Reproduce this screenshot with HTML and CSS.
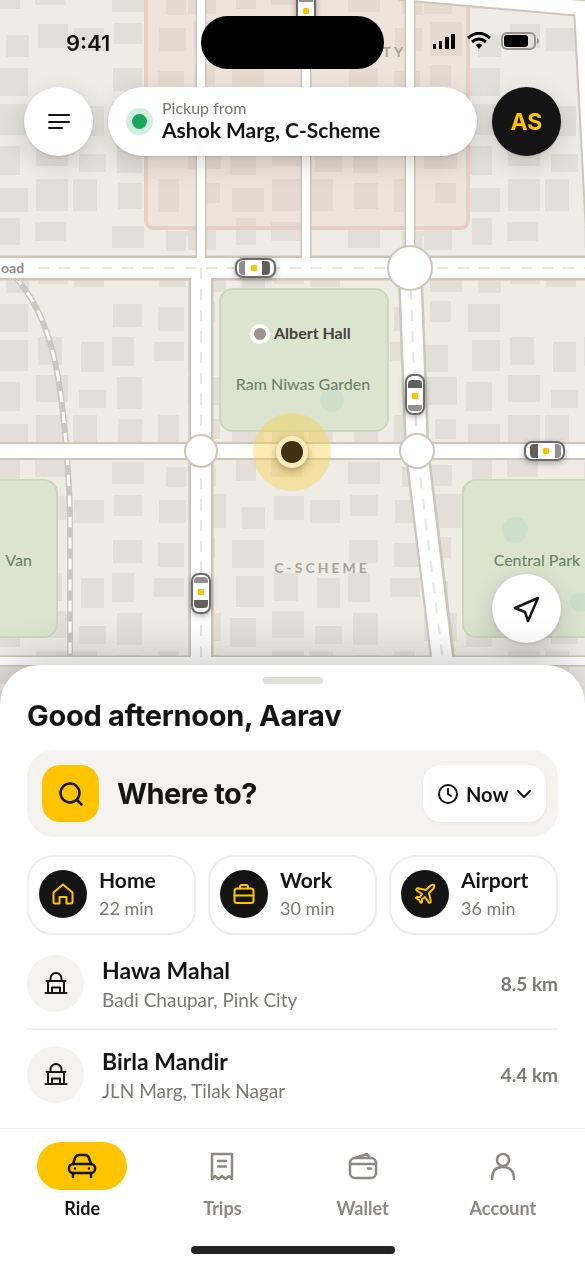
FILE: index.html
```html
<!DOCTYPE html>
<html lang="en">
<head>
    <meta charset="UTF-8">
    <meta name="viewport" content="width=device-width, initial-scale=1">
    <title>Ride</title>
    <link rel="stylesheet" href="styles.css">
</head>
<body>
<div class="app">
    <main class="map-area">
        <svg class="map" viewBox="0 0 585 704" preserveAspectRatio="xMidYMin slice" aria-hidden="true">
            <defs>
                <!-- city blocks, repeated over the whole map -->
                <pattern id="blocks" width="236" height="236" patternUnits="userSpaceOnUse">
                    <g class="block">
                        <rect x="0" y="218" width="20" height="18"/><rect x="0" y="0" width="20" height="9"/>
                        <rect x="35" y="222" width="31" height="14"/><rect x="35" y="0" width="31" height="5"/>
                        <rect x="112" y="226" width="32" height="10"/><rect x="112" y="0" width="32" height="12"/>
                        <rect x="166" y="231" width="22" height="5"/><rect x="166" y="0" width="20" height="15"/>
                        <rect x="188" y="229" width="28" height="7"/><rect x="188" y="0" width="28" height="14"/>
                        <rect x="6" y="35" width="23" height="22"/>
                        <rect x="38" y="24" width="30" height="24"/>
                        <rect x="74" y="28" width="30" height="23"/>
                        <rect x="114" y="23" width="28" height="21"/>
                        <rect x="159" y="28" width="27" height="23"/>
                        <rect x="194" y="22" width="32" height="34"/>
                        <rect x="0" y="68" width="28" height="28"/><rect x="232" y="68" width="4" height="28"/>
                        <rect x="113" y="68" width="29" height="23"/>
                        <rect x="158" y="71" width="26" height="24"/>
                        <rect x="194" y="65" width="21" height="21"/>
                        <rect x="0" y="104" width="28" height="31"/>
                        <rect x="38" y="101" width="24" height="28"/>
                        <rect x="81" y="106" width="23" height="30"/>
                        <rect x="112" y="101" width="22" height="29"/>
                        <rect x="154" y="106" width="30" height="19"/>
                        <rect x="188" y="109" width="24" height="27"/>
                        <rect x="0" y="146" width="20" height="29"/><rect x="230" y="146" width="6" height="29"/>
                        <rect x="36" y="139" width="32" height="27"/>
                        <rect x="79" y="154" width="27" height="18"/>
                        <rect x="117" y="141" width="25" height="32"/>
                        <rect x="188" y="141" width="33" height="28"/>
                        <rect x="0" y="188" width="28" height="24"/><rect x="232" y="188" width="4" height="24"/>
                        <rect x="36" y="179" width="32" height="32"/>
                        <rect x="73" y="179" width="24" height="32"/>
                        <rect x="118" y="183" width="24" height="26"/>
                        <rect x="158" y="179" width="21" height="33"/>
                        <rect x="199" y="183" width="21" height="20"/>
                    </g>
                </pattern>
                <symbol id="taxi" viewBox="-12 -23 24 46" overflow="visible">
                    <rect class="taxi-body" x="-9" y="-20" width="18" height="39" rx="7"/>
                    <path class="taxi-front" d="M-7-7v-4q0-4 4-4h6q4 0 4 4v4z"/>
                    <rect class="taxi-sign" x="-3" y="-2" width="6" height="6" rx="1"/>
                    <path class="taxi-back" d="M-7 10h14v2q0 4-4 4h-6q-4 0-4-4z"/>
                </symbol>
            </defs>

            <rect class="land" width="585" height="704"/>
            <rect width="585" height="704" fill="url(#blocks)"/>
            <rect class="old-city" x="146" y="-20" width="322" height="248" rx="7"/>

            <rect class="park" x="-80" y="480" width="137" height="157" rx="13"/>
            <rect class="park" x="220" y="289" width="168" height="142" rx="13"/>
            <rect class="park" x="463" y="480" width="170" height="157" rx="13"/>
            <g class="pond">
                <circle cx="332" cy="400" r="12"/>
                <circle cx="515" cy="530" r="13"/>
                <circle cx="580" cy="602" r="10"/>
            </g>

            <path class="rail" d="M14 276C58 322 62 400 67 455Q70 500 70 520V658"/>
            <path class="rail-ties" d="M14 276C58 322 62 400 67 455Q70 500 70 520V658"/>

            <g class="casing">
                <path class="lane" d="M201 0V268M306 0V268M410 0V268M0 661H585"/>
                <path class="street" d="M0 451H585M400-8L582 8L596 268"/>
                <path class="road" d="M201 268V661M410 268L417 451L443 661"/>
                <path class="road" d="M0 268H585"/>
            </g>
            <g class="surface">
                <path class="lane" d="M201 0V268M306 0V268M410 0V268M0 661H585"/>
                <path class="street" d="M0 451H585M400-8L582 8L596 268"/>
                <path class="road" d="M0 268H585M201 268V661M410 268L417 451L443 665"/>
            </g>
            <path class="lane-marks" d="M38 268H585M201 268V661M410 268L417 451L443 661"/>

            <g class="roundabout">
                <circle cx="410" cy="268" r="22"/>
                <circle cx="201" cy="451" r="16"/>
                <circle cx="417" cy="451" r="17"/>
            </g>

            <g class="label">
                <text class="label-road" x="1" y="273">oad</text>
                <text class="label-park" x="303" y="390" text-anchor="middle">Ram Niwas Garden</text>
                <text class="label-park" x="32" y="566" text-anchor="end">Van</text>
                <text class="label-park" x="537" y="566" text-anchor="middle">Central Park</text>
                <text class="label-area" x="322" y="573" text-anchor="middle">C-SCHEME</text>
                <text class="label-area" x="406" y="57" text-anchor="end">PINK CITY</text>
                <circle class="place-dot" cx="260" cy="334" r="8"/>
                <text class="label-place" x="274" y="339">Albert Hall</text>
            </g>

            <g class="taxi">
                <use href="#taxi" x="-12" y="-23" width="24" height="46" transform="translate(306 12) rotate(180)"/>
                <use href="#taxi" x="-12" y="-23" width="24" height="46" transform="translate(255 268) rotate(90)"/>
                <use href="#taxi" x="-12" y="-23" width="24" height="46" transform="translate(415 395)"/>
                <use href="#taxi" x="-12" y="-23" width="24" height="46" transform="translate(545 451) rotate(-90)"/>
                <use href="#taxi" x="-12" y="-23" width="24" height="46" transform="translate(201 593) rotate(180)"/>
            </g>

            <circle class="me-halo" cx="292" cy="452" r="39"/>
            <circle class="me-ring" cx="292" cy="452" r="16"/>
            <circle class="me-dot" cx="292" cy="452" r="11"/>
        </svg>

        <header class="status-bar">
            <span class="status-time">9:41</span>
            <span class="island"></span>
            <span class="status-icons">
                <svg width="22" height="16" viewBox="0 0 22 16"><path d="M0 11h3v5H0zM6 8h3v8H6zM12 4h4v12h-4zM18 1h4v15h-4z"/></svg>
                <svg width="24" height="17" viewBox="0 0 24 17"><path class="wave" d="M1 6Q12-3.500 23 6M5 10Q12 4 19 10"/><path d="M8.500 13Q12 10 15.500 13L12 17z"/></svg>
                <svg width="38" height="18" viewBox="0 0 38 18"><rect class="shell" x="1" y="1" width="33" height="16" rx="5"/><rect x="3" y="3" width="24" height="12" rx="3"/><path class="tip" d="M36 6v6q2-1 2-3t-2-3z"/></svg>
            </span>
        </header>

        <div class="top-bar">
            <button class="round-btn" aria-label="Menu">
                <svg width="24" height="20" viewBox="0 0 24 20"><path d="M2 3h20M2 10h20M2 16h13"/></svg>
            </button>
            <button class="pickup">
                <span class="pickup-dot"></span>
                <span class="pickup-text">
                    <span class="pickup-hint">Pickup from</span>
                    <span class="pickup-place">Ashok Marg, C-Scheme</span>
                </span>
            </button>
            <button class="round-btn avatar">AS</button>
        </div>

        <button class="round-btn locate" aria-label="My location">
            <svg width="28" height="28" viewBox="0 0 28 28"><path d="M25 3L2 13l10 4 3 9z"/></svg>
        </button>
    </main>

    <section class="sheet">
        <div class="handle"></div>
        <h1>Good afternoon, Aarav</h1>

        <div class="search">
            <label class="search-icon" for="destination">
                <svg width="24" height="24" viewBox="0 0 24 24"><circle cx="11" cy="11" r="9.500"/><path d="M18 18l4.500 4.500"/></svg>
            </label>
            <input id="destination" type="text" placeholder="Where to?" aria-label="Destination">
            <div class="when">
                <label for="when" aria-label="Pickup time">
                    <svg width="20" height="20" viewBox="0 0 20 20"><circle cx="10" cy="10" r="9"/><path d="M10 5v5l3 2"/></svg>
                </label>
                <select id="when">
                    <option>Now</option>
                </select>
                <svg width="14" height="10" viewBox="0 0 14 10"><path d="M1 2l6 6 6-6"/></svg>
            </div>
        </div>

        <div class="shortcuts">
            <button class="shortcut">
                <span class="shortcut-icon">
                    <svg width="24" height="24" viewBox="0 0 24 24"><path d="M4 21.500q-1.500 0-1.500-1.500V10.500L12 2.500l9.500 8V20q0 1.500-1.500 1.500h-4.500V15h-7v6.500z"/></svg>
                </span>
                <span class="shortcut-text"><b>Home</b><small>22 min</small></span>
            </button>
            <button class="shortcut">
                <span class="shortcut-icon">
                    <svg width="24" height="24" viewBox="0 0 24 24"><rect x="2.500" y="6.500" width="19" height="14.500" rx="2.500"/><path d="M8 6.500V5q0-2 2-2h4q2 0 2 2v1.500M2.500 13.500h19"/></svg>
                </span>
                <span class="shortcut-text"><b>Work</b><small>30 min</small></span>
            </button>
            <button class="shortcut">
                <span class="shortcut-icon">
                    <svg width="24" height="24" viewBox="0 0 24 24"><path d="M17.800 19.200 16 11l3.500-3.500C21 6 21.500 4 21 3c-1-.5-3 0-4.500 1.500L13 8 4.800 6.200c-.5-.1-.9.1-1.100.5l-.3.5c-.2.5-.1 1 .3 1.300L9 12l-2 3H4l-1 1 3 2 2 3 1-1v-3l3-2 3.500 5.300c.3.4.8.5 1.300.3l.5-.2c.4-.3.6-.7.5-1.200z"/></svg>
                </span>
                <span class="shortcut-text"><b>Airport</b><small>36 min</small></span>
            </button>
        </div>

        <ul class="places">
            <li>
                <span class="place-icon">
                    <svg width="24" height="24" viewBox="0 0 24 24"><path d="M6.500 10V7.500a5.500 5.500 0 0 1 11 0v2.500M2.500 10h19M4 10v12M20 10v12M1.500 22h21M8 22v-5.500h8V22"/></svg>
                </span>
                <div class="place-text">
                    <h2>Hawa Mahal</h2>
                    <p>Badi Chaupar, Pink City</p>
                </div>
                <span class="distance">8.5 km</span>
            </li>
            <li>
                <span class="place-icon">
                    <svg width="24" height="24" viewBox="0 0 24 24"><path d="M6.500 10V7.500a5.500 5.500 0 0 1 11 0v2.500M2.500 10h19M4 10v12M20 10v12M1.500 22h21M8 22v-5.500h8V22"/></svg>
                </span>
                <div class="place-text">
                    <h2>Birla Mandir</h2>
                    <p>JLN Marg, Tilak Nagar</p>
                </div>
                <span class="distance">4.4 km</span>
            </li>
        </ul>

        <nav class="tabs">
            <a class="tab active" href="#ride">
                <span class="tab-icon"><svg width="30" height="28" viewBox="0 0 30 28"><rect x="2" y="12" width="26" height="9" rx="4"/><path d="M6 12l2-6q1-3 4-3h6q3 0 4 3l2 6M6 21v4M24 21v4M8 16.500v.1M22 16.500v.1"/></svg></span>
                Ride
            </a>
            <a class="tab" href="#trips">
                <span class="tab-icon"><svg width="30" height="28" viewBox="0 0 30 28"><path d="M5 2h20v25l-3-3-3.500 3L15 24l-3.500 3L8 24l-3 3zM11 9h8M11 14.500h8"/></svg></span>
                Trips
            </a>
            <a class="tab" href="#wallet">
                <span class="tab-icon"><svg width="30" height="28" viewBox="0 0 30 28"><rect x="2" y="6" width="26" height="20" rx="5"/><path d="M2 12h26M7 6l12-4 3 4M20 16.500h3"/></svg></span>
                Wallet
            </a>
            <a class="tab" href="#account">
                <span class="tab-icon"><svg width="30" height="28" viewBox="0 0 30 28"><circle cx="15" cy="8" r="6"/><path d="M4 27q0-12 11-12t11 12"/></svg></span>
                Account
            </a>
        </nav>
        <div class="home-indicator"></div>
    </section>
</div>
</body>
</html>
```

FILE: styles.css
```css
* {
    box-sizing: border-box;
}

body {
    margin: 0;
    font-family: "Lato", "Noto Sans", sans-serif;
    color: #141414;
    background-color: #ffffff;
}

button, input, select {
    font: inherit;
    color: inherit;
    border: 0;
    padding: 0;
    background: none;
}

button {
    cursor: pointer;
}

svg {
    display: block;
}

.app {
    display: flex;
    flex-direction: column;
    min-height: 100vh;
}

/* map */
.map-area {
    position: relative;
    flex: 1;
    display: flex;
    flex-direction: column;
    min-height: 480px;
    padding: 16px 24px 61px;
}

.map {
    position: absolute;
    inset: 0;
    width: 100%;
    height: 100%;
}

.land { fill: #efece6; }
.block { fill: #e3dfd8; }
.old-city {
    fill: rgba(242, 200, 184, 0.22);
    stroke: #e6d0c6;
    stroke-width: 4;
}
.park {
    fill: #dae4cf;
    stroke: #c9d9bd;
    stroke-width: 2;
}
.pond { fill: #cddfcb; }

.rail, .rail-ties, .casing, .surface, .lane-marks {
    fill: none;
}
.rail {
    stroke: #cbc6be;
    stroke-width: 6;
}
.rail-ties {
    stroke: #ffffff;
    stroke-width: 3;
    stroke-dasharray: 11 10;
}

.casing { stroke: #cdc6b9; }
.casing .lane { stroke-width: 11; }
.casing .street { stroke-width: 18; }
.casing .road { stroke-width: 25; }
.surface { stroke: #ffffff; }
.surface .lane { stroke-width: 8; }
.surface .street { stroke-width: 14; }
.surface .road { stroke-width: 20; }
.lane-marks {
    stroke: #e8e6e0;
    stroke-width: 2;
    stroke-dasharray: 11 10;
}
.roundabout {
    fill: #ffffff;
    stroke: #cdc6b9;
    stroke-width: 2;
}

.label {
    font-size: 16px;
    font-weight: 500;
}
.label-road {
    fill: #8f897f;
    font-size: 14px;
    font-weight: 700;
}
.label-park { fill: #6c8468; }
.label-place {
    fill: #45413c;
    font-weight: 700;
}
.label-area {
    fill: #a9a49b;
    font-size: 14px;
    font-weight: 700;
    letter-spacing: 3px;
}
.place-dot {
    fill: #9c948d;
    stroke: #ffffff;
    stroke-width: 4;
}

.taxi {
    filter: drop-shadow(0 2px 3px rgba(0, 0, 0, 0.3));
}
.taxi-body {
    fill: #ffffff;
    stroke: #6d6b69;
    stroke-width: 2;
}
.taxi-front { fill: #62605d; }
.taxi-back { fill: #929090; }
.taxi-sign { fill: #ffc400; }

.me-halo { fill: rgba(248, 208, 72, 0.42); }
.me-ring {
    fill: #fbedbb;
    filter: drop-shadow(0 3px 4px rgba(80, 60, 0, 0.4));
}
.me-dot { fill: #403110; }

/* header over the map */
.status-bar {
    position: relative;
    display: grid;
    grid-template-columns: 1fr 183px 1fr;
    align-items: center;
}

.status-time {
    padding-left: 42px;
    font-family: "Inter", sans-serif;
    font-size: 22px;
    font-weight: 600;
}

.island {
    height: 53px;
    border-radius: 27px;
    background-color: #000000;
}

.status-icons {
    display: flex;
    align-items: center;
    justify-content: flex-end;
    gap: 12px;
    padding: 0 22px 4px 0;
}

.status-icons svg:last-child {
    margin-left: -2px;
}

.wave {
    fill: none;
    stroke: #000000;
    stroke-width: 3;
}
.shell {
    fill: none;
    stroke: #97948f;
    stroke-width: 2;
}
.tip { fill: #97948f; }

.top-bar {
    position: relative;
    display: flex;
    gap: 15px;
    margin-top: 18px;
}

.round-btn {
    display: flex;
    flex: none;
    align-items: center;
    justify-content: center;
    width: 69px;
    height: 69px;
    border-radius: 50%;
    background-color: #ffffff;
    box-shadow: 0 8px 24px rgba(0, 0, 0, 0.16), 0 1px 3px rgba(0, 0, 0, 0.12);
}

.round-btn svg {
    fill: none;
    stroke: #141414;
    stroke-width: 2;
    stroke-linecap: round;
    stroke-linejoin: round;
}

.locate svg {
    stroke-width: 2.5;
}

.avatar {
    font-family: "Inter", sans-serif;
    font-size: 23px;
    font-weight: 700;
    color: #ffc400;
    background-color: #141414;
}

.pickup {
    display: flex;
    flex: 1;
    align-items: center;
    gap: 9px;
    min-width: 0;
    padding: 0 18px 4px;
    border-radius: 35px;
    background-color: #ffffff;
    box-shadow: 0 8px 24px rgba(0, 0, 0, 0.16), 0 1px 3px rgba(0, 0, 0, 0.12);
    text-align: left;
}

.pickup-dot {
    flex: none;
    width: 27px;
    height: 27px;
    margin-top: 4px;
    border: 6px solid #d0efdf;
    border-radius: 50%;
    background-color: #1ba65d;
}

.pickup-text {
    display: flex;
    flex-direction: column;
}

.pickup-hint {
    font-size: 16px;
    line-height: 20px;
    color: #77756f;
}

.pickup-place {
    font-size: 21px;
    line-height: 24px;
    font-weight: 700;
}

.locate {
    position: relative;
    margin-top: auto;
    margin-left: auto;
}

/* bottom sheet */
.sheet {
    position: relative;
    margin-top: -39px;
    padding: 12px 27px;
    border-radius: 39px 39px 0 0;
    background-color: #ffffff;
    box-shadow: 0 -8px 40px rgba(0, 0, 0, 0.2);
}

.handle {
    width: 60px;
    height: 7px;
    margin: 0 auto 14px;
    border-radius: 4px;
    background-color: #dfe0d9;
}

h1 {
    margin: 0 0 16px;
    font-family: "Inter", sans-serif;
    font-size: 29px;
    line-height: 36px;
    font-weight: 700;
    letter-spacing: -0.01em;
}

.search {
    display: flex;
    align-items: center;
    gap: 18px;
    padding: 15px 12px 15px 15px;
    border-radius: 27px;
    background-color: #f4f3f0;
}

.search-icon {
    display: flex;
    flex: none;
    align-items: center;
    justify-content: center;
    width: 57px;
    height: 57px;
    border-radius: 18px;
    background-color: #ffc400;
}

.search svg {
    fill: none;
    stroke: #141414;
    stroke-width: 2;
    stroke-linecap: round;
    stroke-linejoin: round;
}

.search-icon svg {
    stroke-width: 2.5;
}

.search input {
    flex: 1;
    min-width: 0;
    font-family: "Inter", sans-serif;
    font-size: 29px;
    font-weight: 700;
    letter-spacing: -0.02em;
}

.search input::placeholder {
    color: #141414;
    opacity: 1;
}

.when {
    display: flex;
    align-items: center;
    gap: 8px;
    height: 57px;
    padding: 0 15px;
    border-radius: 18px;
    background-color: #ffffff;
    box-shadow: 0 1px 4px rgba(0, 0, 0, 0.06);
}

.when select {
    appearance: none;
    font-size: 20px;
    font-weight: 700;
}

.shortcuts {
    display: grid;
    grid-template-columns: repeat(3, 1fr);
    gap: 12px;
    margin-top: 18px;
}

.shortcut {
    display: flex;
    align-items: center;
    gap: 12px;
    height: 80px;
    padding: 0 10px 2px;
    border: 2px solid #ededea;
    border-radius: 26px;
    text-align: left;
}

.shortcut-icon {
    display: flex;
    flex: none;
    align-items: center;
    justify-content: center;
    width: 48px;
    height: 48px;
    border-radius: 50%;
    background-color: #141414;
}

.shortcut-icon svg {
    fill: none;
    stroke: #ffc400;
    stroke-width: 2;
    stroke-linecap: round;
    stroke-linejoin: round;
}

.shortcut-text {
    display: flex;
    flex-direction: column;
}

.shortcut b {
    font-size: 21px;
    line-height: 28px;
}

.shortcut small {
    font-size: 18px;
    line-height: 28px;
    color: #7b7973;
}

.places {
    margin: 3px 0 10px;
    padding: 0;
    list-style: none;
}

.places li {
    display: flex;
    align-items: center;
    gap: 18px;
    height: 90px;
}

.places li + li {
    border-top: 2px solid #f1f0ee;
}

.place-icon {
    display: flex;
    flex: none;
    align-items: center;
    justify-content: center;
    width: 57px;
    height: 57px;
    border-radius: 50%;
    background-color: #f4f3f0;
}

.place-icon svg {
    fill: none;
    stroke: #141414;
    stroke-width: 2;
    stroke-linecap: round;
    stroke-linejoin: round;
}

.place-text {
    flex: 1;
    padding-top: 3px;
}

.place-text h2 {
    margin: 0;
    font-size: 23px;
    line-height: 30px;
    font-weight: 700;
}

.place-text p {
    margin: 0;
    font-size: 19px;
    line-height: 30px;
    color: #7b7973;
}

.distance {
    font-size: 19px;
    font-weight: 700;
    color: #7b7973;
}

/* tab bar */
.tabs {
    display: flex;
    margin: 0 -27px;
    padding: 13px 12px 0;
    border-top: 1px solid #efeeec;
}

.tab {
    display: flex;
    flex: 1;
    flex-direction: column;
    align-items: center;
    gap: 7px;
    font-size: 18px;
    line-height: 22px;
    font-weight: 700;
    color: #8b8982;
    text-decoration: none;
}

.tab-icon {
    display: flex;
    align-items: center;
    justify-content: center;
    width: 90px;
    height: 48px;
    border-radius: 24px;
}

.tab-icon svg {
    fill: none;
    stroke: currentColor;
    stroke-width: 2.5;
    stroke-linecap: round;
    stroke-linejoin: round;
}

.tab.active {
    color: #141414;
}

.tab.active .tab-icon {
    background-color: #ffc400;
}

.home-indicator {
    width: 204px;
    height: 8px;
    margin: 27px auto 0;
    border-radius: 4px;
    background-color: #222423;
}
```
